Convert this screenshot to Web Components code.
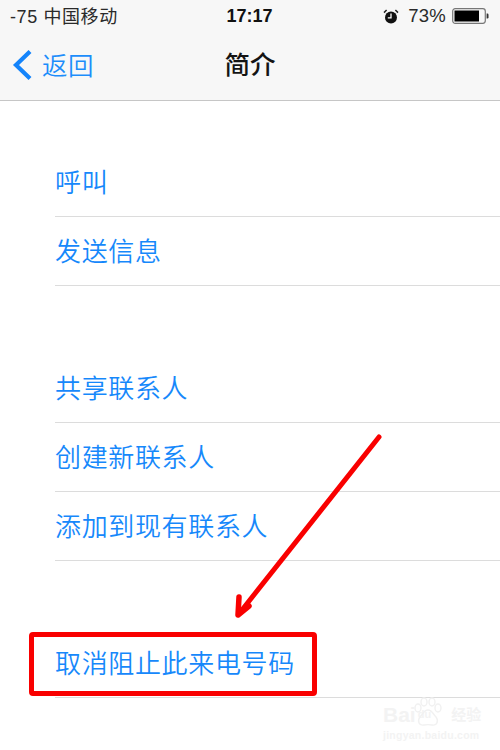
<!DOCTYPE html>
<html lang="zh">
<head>
<meta charset="utf-8">
<title>简介</title>
<style>
html,body{margin:0;padding:0;background:#fff;}
body{width:500px;height:750px;overflow:hidden;position:relative;font-family:"Liberation Sans","Noto Sans CJK SC",sans-serif;}
</style>
</head>
<body>
<phone-header title-text="简介" back-text="返回"></phone-header>
<list-group>
  <list-row>呼叫</list-row>
  <list-row>发送信息</list-row>
</list-group>
<list-group>
  <list-row>共享联系人</list-row>
  <list-row>创建新联系人</list-row>
  <list-row>添加到现有联系人</list-row>
</list-group>
<list-group>
  <list-row>取消阻止此来电号码</list-row>
</list-group>
<red-annotation></red-annotation>
<baidu-mark></baidu-mark>
<script>
class PhoneHeader extends HTMLElement{
  constructor(){
    super();
    const title=this.getAttribute('title-text'),back=this.getAttribute('back-text');
    this.attachShadow({mode:'open'}).innerHTML=`
<style>
:host{display:block;height:100px;background:#f7f7f7;border-bottom:1px solid #c6c6c6;color:#111;margin-bottom:47px;}
.status{height:33px;display:grid;grid-template-columns:1fr auto 1fr;align-items:center;padding:0 11px 0 10px;font-size:18px;color:#2a2a2a;}
.left{font-size:18px;letter-spacing:.6px;padding-bottom:3px;}
.time{font-weight:700;color:#111;font-size:18px;}
.right{display:flex;justify-content:flex-end;align-items:center;padding-bottom:1px;}
.pct{margin:0 6px 0 9px;font-size:18.5px;letter-spacing:.2px;}
.nav{height:67px;display:grid;grid-template-columns:1fr auto 1fr;align-items:center;padding:0 0 4px 0;box-sizing:border-box;}
.back{display:flex;align-items:center;gap:10px;color:#1c8dfb;font-size:25.5px;font-weight:350;letter-spacing:.4px;padding-left:12px;}
.back span{padding-bottom:2px;}
h1{margin:0;font-size:25.5px;font-weight:500;color:#141414;line-height:34px;}
svg{display:block;}
</style>
<div class="status">
  <div class="left">-75 中国移动</div>
  <div class="time">17:17</div>
  <div class="right">
    <svg width="16" height="15" viewBox="0 0 16 15"><path d="M1 3.6 3.6 1M15 3.6 12.4 1" stroke="#222" stroke-width="1.5" fill="none"/><circle cx="8" cy="8.5" r="6" fill="#111"/><path d="M8 4.6v4.2H4.8" stroke="#fff" stroke-width="1.3" fill="none"/></svg>
    <span class="pct">73%</span>
    <svg width="37" height="16" viewBox="0 0 37 16"><rect x=".7" y=".7" width="32.6" height="14.6" rx="2.5" fill="none" stroke="#777" stroke-width="1.2"/><rect x="2.5" y="2.5" width="24.5" height="11" fill="#000"/><path d="M34.6 5.5h.7q1.2 0 1.2 1.2v2.6q0 1.2-1.2 1.2h-.7z" fill="#333"/></svg>
  </div>
</div>
<div class="nav">
  <div class="back">
    <svg width="20" height="32" viewBox="0 0 20 32"><path d="M18 2.5 4 16l14 13.5" fill="none" stroke="#1484fb" stroke-width="4.2"/></svg>
    <span>${back}</span>
  </div>
  <h1>${title}</h1>
  <div></div>
</div>`;
  }
}
class ListGroup extends HTMLElement{
  constructor(){
    super();
    this.attachShadow({mode:'open'}).innerHTML=`
<style>:host{display:block;margin-bottom:68px;}</style><slot></slot>`;
  }
}
class ListRow extends HTMLElement{
  constructor(){
    super();
    this.attachShadow({mode:'open'}).innerHTML=`
<style>
:host{display:block;margin-left:55px;height:69px;box-sizing:border-box;border-bottom:1px solid #dcdcdc;color:#1688fb;font-size:26px;font-weight:350;line-height:71px;letter-spacing:.65px;}
</style><slot></slot>`;
  }
}
class RedAnnotation extends HTMLElement{
  constructor(){
    super();
    this.attachShadow({mode:'open'}).innerHTML=`
<style>
:host{display:block;position:absolute;inset:0;pointer-events:none;}
.box{position:absolute;left:29px;top:632px;width:288px;height:64px;box-sizing:border-box;border:5.5px solid #f90000;border-radius:4px;}
svg{position:absolute;left:0;top:0;}
</style>
<svg width="500" height="750" viewBox="0 0 500 750"><path d="M379 437 242 610" stroke="#f90000" stroke-width="5" stroke-linecap="round" fill="none"/><path d="M239 597 238 615 249 606" stroke="#f90000" stroke-width="5.5" stroke-linecap="round" stroke-linejoin="round" fill="none"/></svg>
<div class="box"></div>`;
  }
}
class BaiduMark extends HTMLElement{
  constructor(){
    super();
    this.attachShadow({mode:'open'}).innerHTML=`
<style>
:host{display:block;position:absolute;left:383px;top:696px;width:112px;height:54px;color:#f3f3f3;font-family:"Liberation Sans","Noto Sans CJK SC",sans-serif;pointer-events:none;}
.top{display:flex;align-items:center;height:32px;padding-top:4px;box-sizing:border-box;font-size:21px;font-weight:700;line-height:1;}
.cn{font-size:15px;margin-left:18px;}
.du{display:inline-block;font-size:11px;margin:0 2px;}
.url{font-size:10.5px;font-weight:700;margin-top:1px;letter-spacing:.25px;}
svg{position:absolute;left:30px;top:1px;}
</style>
<svg width="30" height="32" viewBox="0 0 30 32"><g fill="none" stroke="#f1f1f1" stroke-width="1.4"><ellipse cx="5" cy="11" rx="3" ry="4"/><ellipse cx="11" cy="5" rx="3" ry="4"/><ellipse cx="19" cy="5" rx="3" ry="4"/><ellipse cx="25" cy="11" rx="3" ry="4"/><path d="M15 13c-4 0-5 4-8 7-3 4-1 9 4 8 3-.6 5-.6 8 0 5 1 7-4 4-8-3-3-4-7-8-7z"/></g></svg>
<div class="top"><span>Bai</span><span class="du">du</span><span class="cn">经验</span></div>
<div class="url">jingyan.baidu.com</div>`;
  }
}
customElements.define('phone-header',PhoneHeader);
customElements.define('list-group',ListGroup);
customElements.define('list-row',ListRow);
customElements.define('red-annotation',RedAnnotation);
customElements.define('baidu-mark',BaiduMark);
</script>
</body>
</html>
